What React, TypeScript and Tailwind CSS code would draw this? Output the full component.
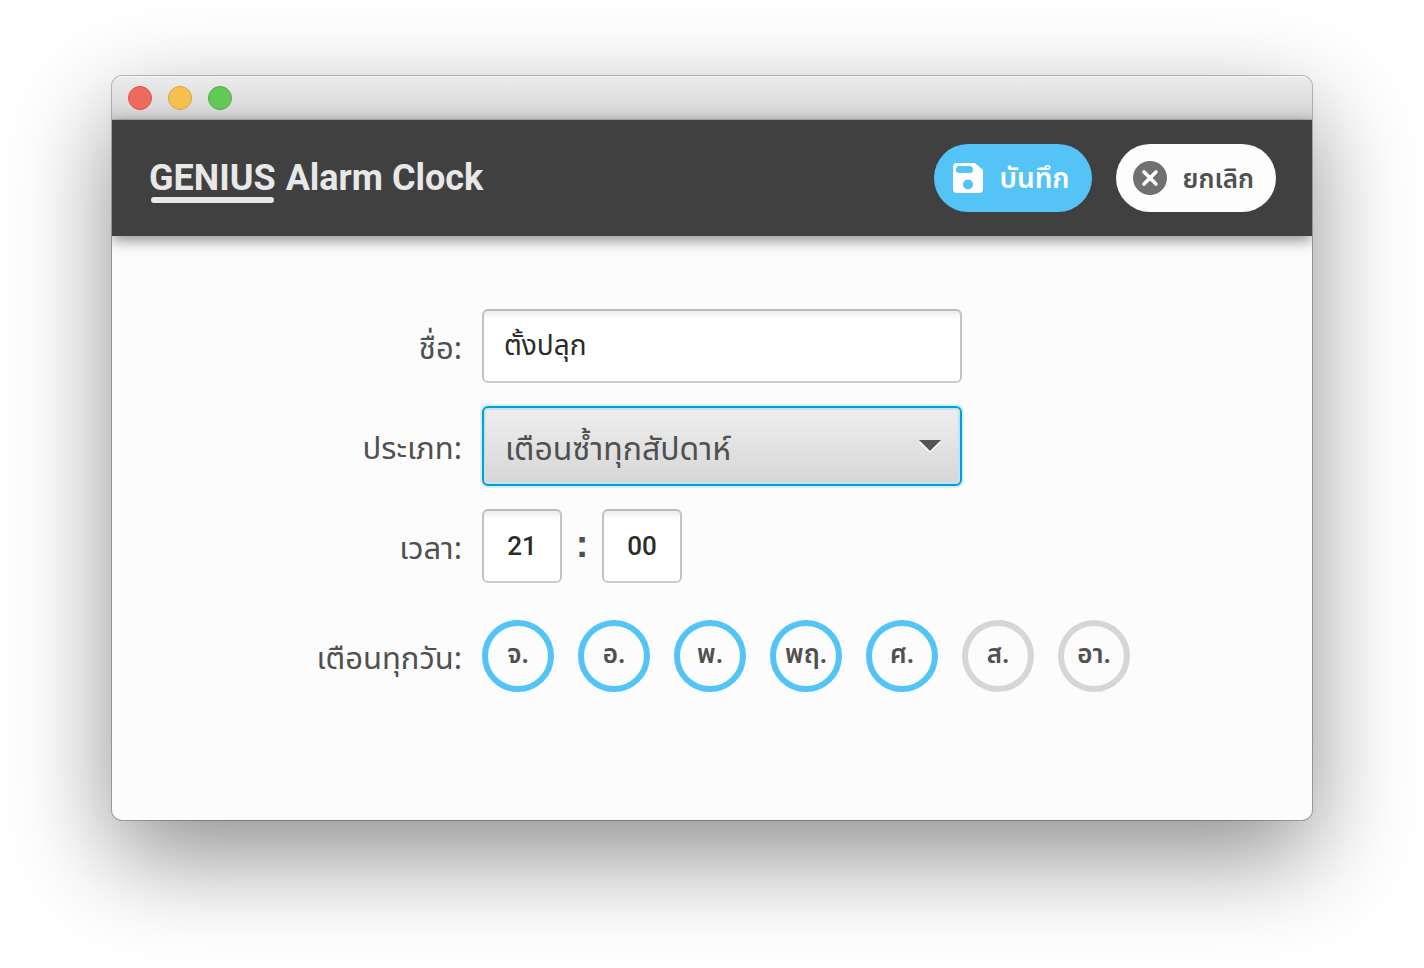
import { useState } from "react";
import type { ReactNode } from "react";

const days = [
  { label: "จ.", name: "จันทร์", on: true },
  { label: "อ.", name: "อังคาร", on: true },
  { label: "พ.", name: "พุธ", on: true },
  { label: "พฤ.", name: "พฤหัสบดี", on: true },
  { label: "ศ.", name: "ศุกร์", on: true },
  { label: "ส.", name: "เสาร์", on: false },
  { label: "อา.", name: "อาทิตย์", on: false },
];

const fieldClass =
  "h-[74px] rounded-[6px] border-2 border-[#cccccc] border-t-[#b9b9b9] border-x-[#c3c3c3] bg-white bg-linear-to-b from-[#ededed] to-white to-[8px] text-[#2b2b2b] outline-none";

function RowLabel({ htmlFor, children }: { htmlFor: string; children: ReactNode }) {
  return (
    <label htmlFor={htmlFor} className="justify-self-end whitespace-nowrap pt-2 text-[31px] leading-10 text-[#505050]">
      {children}
    </label>
  );
}

function TitleBar() {
  return (
    <div className="flex h-11 items-center gap-4 bg-linear-to-b from-[#ececec] to-[#d2d2d2] px-4 shadow-[inset_0_1px_0_#f5f5f5,inset_0_-1px_0_#b4b4b4]">
      <button aria-label="Close" className="size-6 rounded-full border border-[#dd4f47] bg-[#ee6a5f]" />
      <button aria-label="Minimize" className="size-6 rounded-full border border-[#e0a33c] bg-[#f6c050]" />
      <button aria-label="Zoom" className="size-6 rounded-full border border-[#50ad41] bg-[#63c956]" />
    </div>
  );
}

function SaveIcon() {
  return (
    <svg viewBox="0 0 30 30" className="size-[30px]" aria-hidden="true">
      <path
        fillRule="evenodd"
        fill="#fff"
        d="M4 0H22L30 7V26Q30 30 26 30H4Q0 30 0 26V4Q0 0 4 0ZM6.500 3A3.500 3.500 0 0 0 6.500 10H16.500A3.500 3.500 0 0 0 16.500 3ZM15 16.500A5 5 0 1 0 15 26.500A5 5 0 1 0 15 16.500Z"
      />
    </svg>
  );
}

function CancelIcon() {
  return (
    <svg viewBox="0 0 34 34" className="size-[34px]" aria-hidden="true">
      <circle cx="17" cy="17" r="17" fill="#707070" />
      <path d="M11 11L23 23M23 11L11 23" stroke="#fff" strokeWidth="3.6" strokeLinecap="round" />
    </svg>
  );
}

function Header() {
  return (
    <header className="z-10 flex h-[116px] items-center justify-between bg-[#404040] pr-9 pl-[37px] shadow-[0_4px_14px_rgba(0,0,0,0.45)]">
      <h1 className="flex gap-[10px] font-['Roboto'] text-[36px] leading-[42px] font-bold text-[#e8e8e8]">
        <span className="flex flex-col pt-1">
          GENIUS
          <span className="mx-[2px] -mt-[2px] h-[6px] rounded-full bg-[#e8e8e8]" />
        </span>
        <span className="pt-1">Alarm Clock</span>
      </h1>
      <div className="flex gap-6">
        <button className="flex h-[68px] items-center gap-4 rounded-full bg-[#54c3f6] px-[22px] pl-[19px] text-[28px] font-semibold text-white">
          <SaveIcon />
          <span className="pt-1">บันทึก</span>
        </button>
        <button className="flex h-[68px] items-center gap-4 rounded-full bg-[#fdfdfd] pr-[22px] pl-[17px] text-[26px] font-semibold text-[#505050]">
          <CancelIcon />
          <span className="pt-1">ยกเลิก</span>
        </button>
      </div>
    </header>
  );
}

export default function App() {
  const [selected, setSelected] = useState(days.map((d) => d.on));

  return (
    <main className="min-h-screen bg-white px-28 py-[76px] font-['Noto_Sans_Thai','Noto_Sans','Liberation_Sans',sans-serif]">
      <section className="flex flex-col overflow-hidden rounded-[10px] bg-[#fcfcfc] shadow-[0_0_0_1px_rgba(0,0,0,0.25),0_36px_100px_rgba(0,0,0,0.45)]">
        <TitleBar />
        <Header />
        <form className="grid grid-cols-[350px_1fr] items-center gap-x-5 gap-y-[23px] pt-[73px] pb-32">
          <RowLabel htmlFor="name">ชื่อ:</RowLabel>
          <input id="name" defaultValue="ตั้งปลุก" className={`${fieldClass} w-[480px] px-5 text-[28px]`} />

          <RowLabel htmlFor="type">ประเภท:</RowLabel>
          <div className="grid w-[480px] items-center">
            <select
              id="type"
              className="col-start-1 row-start-1 h-20 w-full appearance-none rounded-[6px] border-2 border-[#039ed3] bg-linear-to-b from-[#efefef] to-[#d6d6d6] px-[21px] pt-2 text-[32px] text-[#505050] shadow-[0_0_0_2px_#d5eff8,inset_0_0_0_2px_#c9e1ea] outline-none"
            >
              <option>เตือนซ้ำทุกสัปดาห์</option>
            </select>
            <svg
              viewBox="0 0 22 13"
              className="pointer-events-none col-start-1 row-start-1 mr-[21px] h-[13px] w-[22px] justify-self-end"
              aria-hidden="true"
            >
              <path d="M0 2H22L11 13Z" fill="#fff" />
              <path d="M0 0H22L11 11Z" fill="#555" />
            </svg>
          </div>

          <RowLabel htmlFor="hour">เวลา:</RowLabel>
          <div className="flex items-center">
            <input id="hour" defaultValue="21" className={`${fieldClass} w-20 text-center font-['Roboto'] text-[26px] font-medium`} />
            <span className="w-10 pb-1 text-center font-['Liberation_Sans'] text-[38px] font-bold text-[#505050]">:</span>
            <input aria-label="นาที" defaultValue="00" className={`${fieldClass} w-20 text-center font-['Roboto'] text-[26px] font-medium`} />
          </div>

          <div className="mt-[14px] flex justify-self-end">
            <RowLabel htmlFor="day-0">เตือนทุกวัน:</RowLabel>
          </div>
          <div className="mt-[14px] flex gap-6">
            {days.map((day, i) => (
              <label key={day.label} htmlFor={`day-${i}`} className="grid size-[72px] place-items-center">
                <input
                  id={`day-${i}`}
                  type="checkbox"
                  aria-label={day.name}
                  checked={selected[i]}
                  onChange={() => setSelected(selected.map((v, j) => (j === i ? !v : v)))}
                  className="col-start-1 row-start-1 size-[72px] appearance-none rounded-full border-[6px] border-[#d6d6d6] checked:border-[#54c3f6]"
                />
                <span className="col-start-1 row-start-1 pb-[2px] text-[26px] font-semibold text-[#505050]">{day.label}</span>
              </label>
            ))}
          </div>
        </form>
      </section>
    </main>
  );
}
